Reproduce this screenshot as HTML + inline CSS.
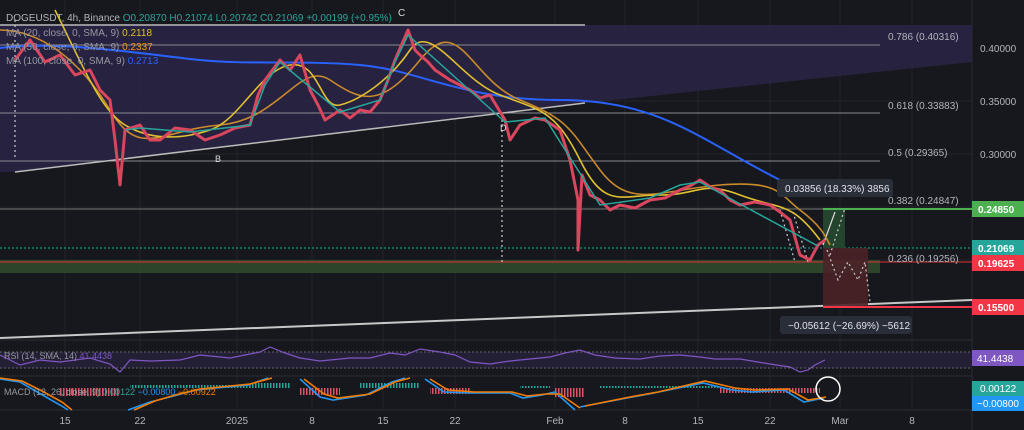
<!DOCTYPE html>
<html><head><meta charset="utf-8"><style>
html,body{margin:0;padding:0;background:#17181d;width:1024px;height:430px;overflow:hidden}
svg{display:block;font-family:"Liberation Sans",sans-serif}
</style></head><body>
<svg width="1024" height="430" viewBox="0 0 1024 430">
<defs>
<pattern id="hg" width="3" height="10" patternUnits="userSpaceOnUse"><rect width="1.5" height="10" fill="#26a69a"/></pattern>
<pattern id="hr" width="3" height="10" patternUnits="userSpaceOnUse"><rect width="1.5" height="10" fill="#e05566"/></pattern>
</defs>
<rect width="1024" height="430" fill="#17181d"/>
<g stroke="#23252c" stroke-width="1">
<line x1="0" y1="48" x2="972" y2="48"/><line x1="0" y1="101" x2="972" y2="101"/><line x1="0" y1="154" x2="972" y2="154"/><line x1="0" y1="207" x2="972" y2="207"/><line x1="0" y1="260" x2="972" y2="260"/>
<line x1="65" y1="0" x2="65" y2="410"/><line x1="140" y1="0" x2="140" y2="410"/><line x1="237" y1="0" x2="237" y2="410"/><line x1="312" y1="0" x2="312" y2="410"/><line x1="383" y1="0" x2="383" y2="410"/><line x1="455" y1="0" x2="455" y2="410"/><line x1="555" y1="0" x2="555" y2="410"/><line x1="625" y1="0" x2="625" y2="410"/><line x1="698" y1="0" x2="698" y2="410"/><line x1="770" y1="0" x2="770" y2="410"/><line x1="840" y1="0" x2="840" y2="410"/><line x1="912" y1="0" x2="912" y2="410"/>
</g>
<line x1="972" y1="0" x2="972" y2="430" stroke="#2a2c33"/>
<line x1="0" y1="340" x2="972" y2="340" stroke="#2a2c33"/>
<line x1="0" y1="376" x2="972" y2="376" stroke="#2a2c33"/>
<line x1="0" y1="410" x2="1024" y2="410" stroke="#2a2c33"/>
<polygon points="0,25 972,25 972,62 585,103 15,172 0,172" fill="#2a2545" opacity="0.85"/>
<g stroke="#8a8a92" stroke-width="1">
<line x1="0" y1="45" x2="880" y2="45"/><line x1="0" y1="113" x2="880" y2="113"/><line x1="0" y1="161" x2="880" y2="161"/><line x1="0" y1="209" x2="972" y2="209" stroke="#777"/>
</g>
<line x1="0" y1="25" x2="585" y2="25" stroke="#bbb" stroke-width="1.5"/>
<line x1="15" y1="172" x2="585" y2="103" stroke="#bbb" stroke-width="1.5"/>
<line x1="0" y1="338" x2="972" y2="300" stroke="#c8c8c8" stroke-width="2"/>
<rect x="0" y="260" width="880" height="13" fill="#2f4a2c" opacity="0.9"/>
<line x1="0" y1="262" x2="972" y2="262" stroke="#d33" stroke-width="1"/>
<line x1="0" y1="248" x2="972" y2="248" stroke="#2a9" stroke-dasharray="2,2"/>
<rect x="823" y="209" width="22" height="39" fill="#24442d"/>
<rect x="823" y="248" width="45" height="59" fill="#4a2228" opacity="0.9"/>
<line x1="823" y1="209" x2="972" y2="209" stroke="#4caf50" stroke-width="2"/>
<line x1="823" y1="307" x2="972" y2="307" stroke="#f23645" stroke-width="2"/>
<g stroke="#ccc" stroke-dasharray="2,3" fill="none" stroke-width="1.2">
<line x1="15" y1="20" x2="15" y2="160"/><line x1="502" y1="120" x2="502" y2="262"/>
<polyline points="780,210 795,262"/><polyline points="793,212 808,262"/>
<polyline points="827,250 838,280 848,262 858,280 865,262 870,302"/>
<polyline points="830,255 845,208"/>
</g>
<line x1="823" y1="245" x2="835" y2="212" stroke="#ddd" stroke-width="1.2"/>
<path d="M0,48 C60,40 150,55 200,60 S300,60 360,65 S460,100 560,100 S700,140 780,180" stroke="#2962ff" stroke-width="2" fill="none"/>
<path d="M0,30 C40,30 80,60 110,110 S160,130 220,125 S300,60 330,80 S380,110 420,60 S470,80 520,100 S570,130 600,170 S660,190 720,185 S780,195 800,210 S825,235 830,245" stroke="#c98a2c" stroke-width="1.6" fill="none"/>
<path d="M55,10 C80,60 100,110 125,125 S180,140 210,130 S260,70 290,65 S320,110 340,105 S390,80 410,50 S460,80 500,95 S555,110 580,160 S620,195 660,195 S700,180 740,195 S790,200 820,240" stroke="#e0c030" stroke-width="1.6" fill="none"/>
<polyline fill="none" stroke-width="3" stroke="#d9465e" stroke-linejoin="round" points="15,60 30,40 45,62 60,55 75,75 90,70 100,90 110,100 115,140 120,185 125,130 140,125 150,140 160,140 175,128 190,130 205,140 220,135 235,128 250,125 258,95 265,80 280,60 290,70 300,55 310,90 318,105 325,120 340,110 350,118 360,110 370,112 380,100 388,80 395,60 408,30 415,50 420,55 428,62 435,70 450,80 460,85 470,90 480,98 490,95 505,120 510,140 520,125 535,118 545,120 560,130 570,160 578,200 578,250 582,175 590,195 600,200 610,210 620,205 635,208 650,200 665,198 680,190 690,186 700,180 712,188 720,190 730,200 740,205 755,202 770,205 780,212 790,220 800,255 810,260 818,245 825,240"/>
<polyline fill="none" stroke-width="1.5" stroke="#26a69a" points="125,130 140,128 190,132 250,125 265,85 280,62 340,112 380,100 395,62 408,35 505,122 545,118 600,205 650,198 680,185 700,182 740,204 818,246"/>
<text x="398" y="16" fill="#ddd" font-size="10">C</text>
<text x="215" y="162" fill="#ddd" font-size="9">B</text>
<text x="500" y="131" fill="#ddd" font-size="9">D</text>
<g fill="#b2b5be" font-size="10">
<text x="888" y="40">0.786 (0.40316)</text><text x="888" y="109">0.618 (0.33883)</text><text x="888" y="156">0.5 (0.29365)</text><text x="888" y="204">0.382 (0.24847)</text><text x="888" y="262">0.236 (0.19256)</text>
</g>
<rect x="777" y="179" width="116" height="18" rx="3" fill="#2a2e39"/>
<text x="785" y="192" fill="#e0e3eb" font-size="10">0.03856 (18.33%) 3856</text>
<rect x="780" y="316" width="132" height="18" rx="3" fill="#2a2e39"/>
<text x="788" y="329" fill="#e0e3eb" font-size="10">−0.05612 (−26.69%) −5612</text>
<g fill="#b2b5be" font-size="10"><text x="980" y="52">0.40000</text><text x="980" y="105">0.35000</text><text x="980" y="158">0.30000</text></g>
<rect x="972" y="201" width="52" height="16" fill="#4caf50"/><text x="978" y="213" fill="#fff" font-size="10" font-weight="bold">0.24850</text>
<rect x="972" y="240" width="52" height="16" fill="#26a69a"/><text x="978" y="252" fill="#fff" font-size="10" font-weight="bold">0.21069</text>
<rect x="972" y="255" width="52" height="16" fill="#f23645"/><text x="978" y="267" fill="#fff" font-size="10" font-weight="bold">0.19625</text>
<rect x="972" y="299" width="52" height="16" fill="#f23645"/><text x="978" y="311" fill="#fff" font-size="10" font-weight="bold">0.15500</text>
<g font-size="10">
<text x="6" y="21" fill="#b2b5be">DOGEUSDT, 4h, Binance <tspan fill="#26a69a">O0.20870 H0.21074 L0.20742 C0.21069 +0.00199 (+0.95%)</tspan></text>
<text x="6" y="36" fill="#9598a1">MA (20, close, 0, SMA, 9) <tspan fill="#e0c030">0.2118</tspan></text>
<text x="6" y="50" fill="#9598a1">MA (50, close, 0, SMA, 9) <tspan fill="#f7931a">0.2337</tspan></text>
<text x="6" y="64" fill="#9598a1">MA (100, close, 0, SMA, 9) <tspan fill="#2962ff">0.2713</tspan></text>
</g>
<rect x="0" y="352" width="972" height="16" fill="#231f35"/>
<line x1="0" y1="352" x2="972" y2="352" stroke="#666" stroke-dasharray="2,2"/>
<line x1="0" y1="368" x2="972" y2="368" stroke="#666" stroke-dasharray="2,2"/>
<polyline fill="none" stroke="#7e57c2" stroke-width="1.2" points="0,355 20,365 40,360 60,362 90,358 110,364 120,372 130,360 150,361 180,360 200,355 230,358 260,352 270,347 285,353 300,358 320,361 350,358 370,358 390,353 405,355 420,349 440,352 455,355 470,362 490,364 510,361 530,359 550,357 565,353 580,350 595,355 615,358 640,359 660,356 680,355 700,357 715,359 740,359 770,364 790,367 800,372 808,370 815,365 825,360"/>
<text x="4" y="359" fill="#9598a1" font-size="9">RSI (14, SMA, 14) <tspan fill="#7e57c2">41.4438</tspan></text>
<rect x="972" y="350" width="52" height="16" fill="#7e57c2"/><text x="977" y="362" fill="#fff" font-size="10">41.4438</text>
<rect x="60" y="388" width="60" height="8" fill="url(#hr)"/>
<rect x="130" y="385" width="150" height="3" fill="url(#hg)"/>
<rect x="250" y="383" width="40" height="5" fill="url(#hg)"/>
<rect x="300" y="388" width="40" height="7" fill="url(#hr)"/>
<rect x="360" y="383" width="60" height="5" fill="url(#hg)"/>
<rect x="430" y="388" width="40" height="6" fill="url(#hr)"/>
<rect x="520" y="386" width="30" height="2" fill="url(#hg)"/>
<rect x="555" y="388" width="30" height="9" fill="url(#hr)"/>
<rect x="600" y="386" width="120" height="2" fill="url(#hg)"/>
<rect x="720" y="388" width="100" height="5" fill="url(#hr)"/>
<g stroke-width="1.6" fill="none">
<path stroke="#2196f3" d="M0,379 L20,382 39,393 60,405 68,410 M128,410 L150,402 170,397 196,390 248,385 268,378 M300,379 L320,397 333,400 366,395 392,382 405,378 M425,379 L444,392 470,393 510,393 523,398 542,395 555,392 575,410 M580,407 L627,398 654,393 703,383 732,390 752,392 784,390 804,402 824,398"/>
<path stroke="#f57c00" d="M0,378 L22,381 42,391 62,402 72,410 M134,410 L155,401 175,395 200,389 250,384 272,378 M304,379 L324,394 338,398 370,394 395,382 410,378 M430,379 L448,390 474,392 512,392 527,396 546,394 560,394 580,408 M585,406 L630,397 658,392 705,381 735,388 755,390 788,389 808,400 826,397"/>
</g>
<circle cx="828" cy="389" r="12" fill="none" stroke="#fff" stroke-width="1.5"/>
<text x="4" y="395" fill="#9598a1" font-size="9">MACD (12, 26, close, 9) <tspan fill="#26a69a">0.00122</tspan> <tspan fill="#2196f3">−0.00800</tspan> <tspan fill="#f57c00">−0.00922</tspan></text>
<rect x="972" y="381" width="52" height="15" fill="#26a69a"/><text x="980" y="392" fill="#fff" font-size="10">0.00122</text>
<rect x="972" y="396" width="52" height="15" fill="#2196f3"/><text x="977" y="407" fill="#fff" font-size="10">−0.00800</text>
<g fill="#b2b5be" font-size="10" text-anchor="middle">
<text x="65" y="424">15</text><text x="140" y="424">22</text><text x="237" y="424">2025</text><text x="312" y="424">8</text><text x="383" y="424">15</text><text x="455" y="424">22</text><text x="555" y="424">Feb</text><text x="625" y="424">8</text><text x="698" y="424">15</text><text x="770" y="424">22</text><text x="840" y="424">Mar</text><text x="912" y="424">8</text>
</g>
</svg>
</body></html>
